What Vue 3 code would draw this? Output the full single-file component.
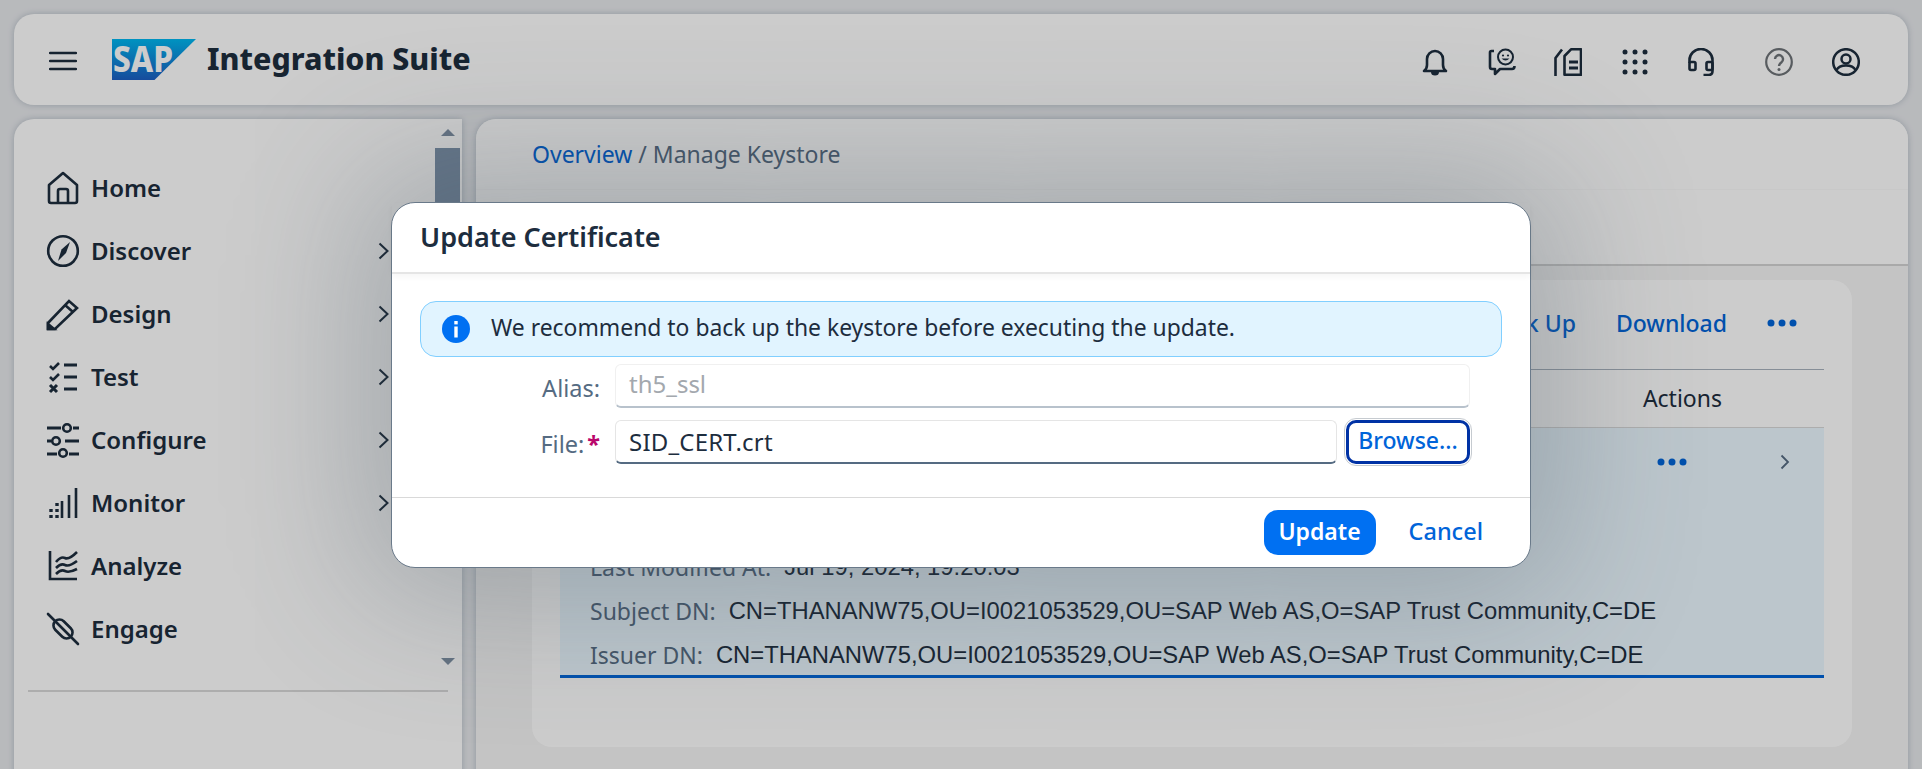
<script setup>
const navItems = [
  { label: 'Home', icon: 'home', arrow: false },
  { label: 'Discover', icon: 'compass', arrow: true },
  { label: 'Design', icon: 'pencil', arrow: true },
  { label: 'Test', icon: 'test', arrow: true },
  { label: 'Configure', icon: 'sliders', arrow: true },
  { label: 'Monitor', icon: 'monitor', arrow: true },
  { label: 'Analyze', icon: 'analyze', arrow: false },
  { label: 'Engage', icon: 'plug', arrow: false }
]
const dn = 'CN=THANANW75,OU=I0021053529,OU=SAP Web AS,O=SAP Trust Community,C=DE'
</script>

<template>
  <div class="page">
    <header class="shell">
      <svg class="burger" width="28" height="20" viewBox="0 0 28 20"><path d="M1 2h26M1 10h26M1 18h26" stroke="#1d2d3e" stroke-width="2.4" stroke-linecap="round" fill="none"/></svg>
      <svg class="logo" width="84" height="41" viewBox="0 0 84 41">
        <defs><linearGradient id="sapg" x1="0" y1="0" x2="0" y2="1"><stop offset="0" stop-color="#00b8f1"/><stop offset="1" stop-color="#1c5fc4"/></linearGradient></defs>
        <path d="M0 0h84L42.5 41H0z" fill="url(#sapg)"/>
        <text x="1" y="33" class="logo-text" textLength="60" lengthAdjust="spacingAndGlyphs">SAP</text>
      </svg>
      <div class="product">Integration Suite</div>
      <div class="shell-icons">
        <svg class="ic" viewBox="0 0 28 28"><path d="M3 23c2-1.500 3-3 3-6v-6a8 8 0 0 1 16 0v6c0 3 1 4.500 3 6z" fill="none" stroke="#1d2d3e" stroke-width="2.600" stroke-linejoin="round"/><path d="M10 24h8a4 3.500 0 0 1-8 0z" fill="#1d2d3e"/></svg>
        <svg class="ic" viewBox="0 0 28 28"><path d="M6 3H3.500Q2 3 2 4.500V19q0 2 2 2h3v5l5-5h12q2.500 0 2.500-3" fill="none" stroke="#1d2d3e" stroke-width="2.600" stroke-linejoin="round"/><circle cx="17.500" cy="9" r="7.500" fill="none" stroke="#1d2d3e" stroke-width="2"/><circle cx="15" cy="7.500" r="1.100" fill="#1d2d3e"/><circle cx="20" cy="7.500" r="1.100" fill="#1d2d3e"/><path d="M13.500 10.500q4 4 8 0z" fill="#1d2d3e"/></svg>
        <svg class="ic" viewBox="0 0 28 28"><path d="M1.500 28V10L8 1.500M17 1.300h10v25.400H10.500V8z" fill="none" stroke="#1d2d3e" stroke-width="2.600" stroke-linejoin="round"/><path d="M15 14h9M15 20h9" stroke="#1d2d3e" stroke-width="2.800"/></svg>
        <svg class="ic" viewBox="0 0 28 28"><g fill="#1d2d3e"><circle cx="4" cy="4" r="2.500"/><circle cx="14" cy="4" r="2.500"/><circle cx="24" cy="4" r="2.500"/><circle cx="4" cy="14" r="2.500"/><circle cx="14" cy="14" r="2.500"/><circle cx="24" cy="14" r="2.500"/><circle cx="4" cy="24" r="2.500"/><circle cx="14" cy="24" r="2.500"/><circle cx="24" cy="24" r="2.500"/></g></svg>
        <svg class="ic" viewBox="0 0 28 28"><path d="M2.500 15V12a11.500 11 0 0 1 23 0v11q0 4-4 4h-5" fill="none" stroke="#1d2d3e" stroke-width="2.600"/><rect x="2.500" y="14" width="6" height="8" rx="1.500" fill="none" stroke="#1d2d3e" stroke-width="2.600"/><rect x="19.500" y="14" width="6" height="8" rx="1.500" fill="none" stroke="#1d2d3e" stroke-width="2.600"/></svg>
        <svg class="ic help" viewBox="0 0 28 28"><circle cx="14" cy="14" r="12.800" fill="none" stroke="#6f7478" stroke-width="2.200"/><path d="M10 11a4 4 0 1 1 6.500 3.200c-1.600 1.200-2.500 2-2.500 3.800" fill="none" stroke="#6f7478" stroke-width="2.400"/><circle cx="14" cy="21.500" r="1.500" fill="#6f7478"/></svg>
        <svg class="ic" viewBox="0 0 28 28"><circle cx="14" cy="14" r="12.800" fill="none" stroke="#1d2d3e" stroke-width="2.500"/><circle cx="14" cy="11" r="4.500" fill="none" stroke="#1d2d3e" stroke-width="2.500"/><path d="M4.500 22c2-4 6-4.500 9.500-4.500S21.500 18 23.500 22" fill="none" stroke="#1d2d3e" stroke-width="2.500"/></svg>
      </div>
    </header>

    <div class="columns">
      <aside class="side">
        <div class="side-scroll">
          <nav class="nav">
            <div v-for="item in navItems" :key="item.label" class="nav-item">
              <svg class="nav-icon" viewBox="0 0 32 32" fill="none" stroke="#1d2d3e" stroke-width="2.600">
                <template v-if="item.icon === 'home'">
                  <path d="M2 13L16 1l14 12v16q0 2-2 2H4q-2 0-2-2z" stroke-linejoin="round"/><path d="M11 31V19q0-2 2-2h6q2 0 2 2v12"/>
                </template>
                <template v-else-if="item.icon === 'compass'">
                  <circle cx="16" cy="16" r="14.800"/><path d="M23 7l-4 11-8 8 3.500-11.500z" fill="#1d2d3e" stroke="none"/>
                </template>
                <template v-else-if="item.icon === 'pencil'">
                  <path d="M1 25L22 3l8 7-22 21H1zM18 7l8 7"/><path d="M1 26l6 5H1z" fill="#1d2d3e"/>
                </template>
                <template v-else-if="item.icon === 'test'">
                  <path d="M3 5l3 3 6-6M3 16l3 3 6-6" stroke-width="2.600"/><path d="M3 24l7 7M10 24l-7 7" stroke-width="3"/><path d="M17 4h13M17 16h13M17 28h13" stroke-width="2.800"/>
                </template>
                <template v-else-if="item.icon === 'sliders'">
                  <path d="M0 4h14M26 4h6M0 30h10M22 30h10M18 17h14M0 17h4" stroke-width="2.800"/><circle cx="20" cy="4" r="3.800"/><circle cx="9" cy="17" r="3.800"/><circle cx="16" cy="29" r="3.800"/>
                </template>
                <template v-else-if="item.icon === 'monitor'">
                  <path d="M15 31V14M22 31V8M29 31V1"/><path d="M4 31v-3M4 25v-3M10 31v-3M10 25v-3M10 19v-3" stroke-width="3.400"/>
                </template>
                <template v-else-if="item.icon === 'analyze'">
                  <path d="M3 1v28h27M9 12q5-6 9-4t12-6M9 18q5-5 9-3t12-4M9 24q5-5 9-3t12-2"/>
                </template>
                <template v-else>
                  <path d="M1 1l30 30" stroke-linecap="round"/><rect x="5" y="10" width="22" height="12" rx="6" transform="rotate(45 16 16)"/>
                </template>
              </svg>
              <span class="nav-label">{{ item.label }}</span>
              <svg v-if="item.arrow" class="nav-arrow" width="11" height="18" viewBox="0 0 11 18"><path d="M1.500 1.500l8 7.500-8 7.500" fill="none" stroke="#1d2d3e" stroke-width="2"/></svg>
            </div>
          </nav>
          <div class="scrollbar">
            <span class="arrow-up"></span>
            <span class="thumb"></span>
            <span class="arrow-down"></span>
          </div>
        </div>
        <div class="side-line"></div>
      </aside>

      <main class="main">
        <div class="crumbs"><span class="link">Overview</span> / Manage Keystore</div>
        <div class="tabs"></div>
        <section class="content">
          <div class="toolbar">
            <span class="link">Back Up</span>
            <span class="link">Download</span>
            <svg width="30" height="8" viewBox="0 0 30 8"><g fill="#0064d9"><circle cx="4" cy="4" r="3.500"/><circle cx="15" cy="4" r="3.500"/><circle cx="26" cy="4" r="3.500"/></g></svg>
          </div>
          <div class="thead"><span>Actions</span></div>
          <div class="row">
            <div class="row-actions">
              <svg width="30" height="8" viewBox="0 0 30 8"><g fill="#0064d9"><circle cx="4" cy="4" r="3.500"/><circle cx="15" cy="4" r="3.500"/><circle cx="26" cy="4" r="3.500"/></g></svg>
              <svg width="10" height="16" viewBox="0 0 10 16"><path d="M1.500 1.500L8 8l-6.500 6.500" fill="none" stroke="#556b82" stroke-width="1.800"/></svg>
            </div>
            <p><span class="key">Last Modified At:</span><span class="val">Jul 19, 2024, 19:20:03</span></p>
            <p><span class="key">Subject DN:</span><span class="val">{{ dn }}</span></p>
            <p><span class="key">Issuer DN:</span><span class="val">{{ dn }}</span></p>
          </div>
        </section>
      </main>
    </div>

    <div class="dim"></div>

    <div class="dialog">
      <div class="dialog-head">Update Certificate</div>
      <div class="dialog-body">
        <div class="strip">
          <svg width="28" height="28" viewBox="0 0 28 28"><circle cx="14" cy="14" r="14" fill="#0070f2"/><rect x="12.300" y="11.500" width="3.400" height="11" fill="#fff"/><rect x="12.300" y="6" width="3.400" height="3.400" fill="#fff"/></svg>
          <span class="strip-text">We recommend to back up the keystore before executing the update.</span>
        </div>
        <div class="form-row">
          <label>Alias:</label>
          <div class="input readonly">th5_ssl</div>
        </div>
        <div class="form-row">
          <label>File:<b>*</b></label>
          <div class="input file">SID_CERT.crt</div>
          <button class="browse">Browse...</button>
        </div>
      </div>
      <div class="dialog-foot">
        <button class="primary">Update</button>
        <button class="ghost">Cancel</button>
      </div>
    </div>
  </div>
</template>

<style>
html, body { margin: 0; background: #e7e9ec; }
</style>

<style scoped>
.page {
  position: relative;
  width: 1922px;
  height: 769px;
  overflow: hidden;
  box-sizing: border-box;
  padding: 14px 14px 0;
  background: #e7e9ec;
  color: #1d2d3e;
  font-family: "Noto Sans", "Open Sans", sans-serif;
}
.shell {
  height: 91px;
  display: flex;
  align-items: center;
  box-sizing: border-box;
  padding: 0 0 0 35px;
  background: #fff;
  border-radius: 20px;
  box-shadow: 0 0 6px rgba(85, 107, 130, .35);
}
.burger { margin-top: 3px; }
.logo { margin: 0 0 0 35px; overflow: visible; }
.logo-text { font: 800 36px "Noto Sans", sans-serif; fill: #fff; }
.product { margin: -2px 0 0 11px; font-size: 30.300px; font-weight: 800; }
.shell-icons { margin: 4px 48px 0 auto; display: flex; align-items: center; gap: 38.500px; }
.ic { width: 28px; height: 28px; display: block; }
.help { margin-left: 11px; margin-right: 1px; }
.columns { display: flex; gap: 14px; margin-top: 14px; height: 700px; }
.side {
  width: 448px;
  background: #fff;
  border-radius: 20px 0 0 0;
  box-shadow: 0 0 6px rgba(85, 107, 130, .35);
}
.side-scroll { display: flex; height: 562px; padding-top: 6px; }
.nav { flex: 1; padding-top: 31px; }
.nav-item { height: 63px; display: flex; align-items: center; padding-left: 33px; }
.nav-icon { width: 32px; height: 32px; overflow: visible; }
.nav-label { margin-left: 12px; font-size: 24px; font-weight: 600; }
.nav-arrow { margin-left: auto; margin-right: 46px; }
.scrollbar { width: 25px; margin-right: 2px; display: flex; flex-direction: column; align-items: center; }
.arrow-up { width: 0; height: 0; border: 7px solid transparent; border-top: 0; border-bottom: 7px solid #7d8fa3; margin-top: 4px; }
.thumb { width: 25px; height: 300px; margin-top: 12px; background: #7d93ab; }
.arrow-down { width: 0; height: 0; border: 7px solid transparent; border-bottom: 0; border-top: 7px solid #7d8fa3; margin-top: auto; margin-bottom: 22px; }
.side-line { height: 2px; margin: 3px 14px 0; background: #d9d9d9; }
.main {
  flex: 1;
  background: #f5f5f5;
  border-radius: 20px 20px 0 0;
  box-shadow: 0 0 6px rgba(85, 107, 130, .35);
  display: flex;
  flex-direction: column;
}
.crumbs { height: 70px; box-sizing: border-box; padding: 19px 0 0 56px; background: #fff; border-radius: 20px 20px 0 0; font-size: 23px; color: #556b82; }
.link { color: #0064d9; }
.tabs { height: 74px; background: #fff; border-top: 1px solid #fbfbfb; border-bottom: 2px solid #d4d4d4; }
.content { margin: 14px 56px 0; height: 467px; box-sizing: border-box; padding: 0 28px; background: #fff; border-radius: 20px; }
.toolbar { height: 90px; display: flex; align-items: center; justify-content: flex-end; gap: 40px; padding: 0 27px 4px 0; font-size: 23px; font-weight: 500; border-bottom: 1px solid #a8b2bd; box-sizing: border-box; }
.thead { height: 58px; display: flex; align-items: center; justify-content: flex-end; padding: 0 102px 2px 0; font-size: 23px; border-bottom: 1px solid #d9d9d9; box-sizing: border-box; }
.row { position: relative; height: 250px; box-sizing: border-box; padding-top: 117px; background: #ebf8ff; border-bottom: 3px solid #0064d9; font-size: 23px; }
.row p { margin: 0 0 0 30px; height: 44px; line-height: 44px; display: flex; gap: 13px; }
.key { color: #556b82; }
.val { font-family: "Liberation Sans", sans-serif; font-size: 23.800px; color: #1d2d3e; }
.row-actions { position: absolute; top: 26px; right: 34px; display: flex; align-items: center; gap: 93px; }
.dim { position: absolute; inset: 0; background: rgba(0, 0, 0, .2); }
.dialog {
  position: absolute;
  left: 391px;
  top: 202px;
  width: 1140px;
  height: 366px;
  box-sizing: border-box;
  display: flex;
  flex-direction: column;
  background: #fff;
  border: 1px solid #6a7a8a;
  border-radius: 24px;
  box-shadow: 0 0 140px 30px rgba(70, 85, 100, .3);
}
.dialog-head { height: 69px; padding-left: 28px; line-height: 68px; font-size: 27px; font-weight: 600; border-bottom: 2px solid #e5e5e5; box-shadow: 0 3px 6px rgba(0, 0, 0, .04); }
.dialog-body { flex: 1; padding: 27px 28px 0; }
.strip { height: 56px; box-sizing: border-box; display: flex; align-items: center; gap: 21px; padding-left: 21px; background: #e1f4ff; border: 1px solid #81cfff; border-radius: 16px; font-size: 22.900px; }
.strip-text { margin-top: -3px; }
.form-row { display: flex; align-items: center; gap: 15px; margin-top: 7px; height: 44px; padding-right: 32px; }
.form-row + .form-row { margin-top: 12px; }
.form-row label { width: 180px; flex: none; text-align: right; padding-top: 4px; font-size: 23.500px; color: #556b82; }
.form-row label b { color: #ba066c; margin-left: 3px; }
.input { flex: 1; height: 44px; box-sizing: border-box; padding-left: 13px; line-height: 38px; font-size: 24px; background: #fff; border: 1px solid #e5e5e5; border-bottom: 2px solid #556b82; border-radius: 6px; }
.input.file { line-height: 41px; letter-spacing: .2px; }
.readonly { color: #a3a8ae; border-color: #f0f0f0; border-bottom-color: #b8c2cc; }
.browse { flex: none; width: 124px; height: 44px; margin-left: -6px; padding: 0 0 4px; box-sizing: border-box; font: 500 23px "Noto Sans", sans-serif; color: #0064d9; background: #fff; border: 3px solid #0032a5; outline: 1px solid #c6cbd0; outline-offset: 1px; border-radius: 10px; }
.dialog-foot { height: 70px; box-sizing: border-box; display: flex; align-items: center; justify-content: flex-end; gap: 33px; padding-right: 47px; border-top: 1px solid #d9d9d9; }
.primary { width: 112px; height: 45px; padding: 0 0 3px; border: 0; border-radius: 14px; background: #0070f2; color: #fff; font: 600 23px "Noto Sans", sans-serif; }
.ghost { padding: 0 0 3px; border: 0; background: none; color: #0064d9; font: 500 23.500px "Noto Sans", sans-serif; }
</style>
